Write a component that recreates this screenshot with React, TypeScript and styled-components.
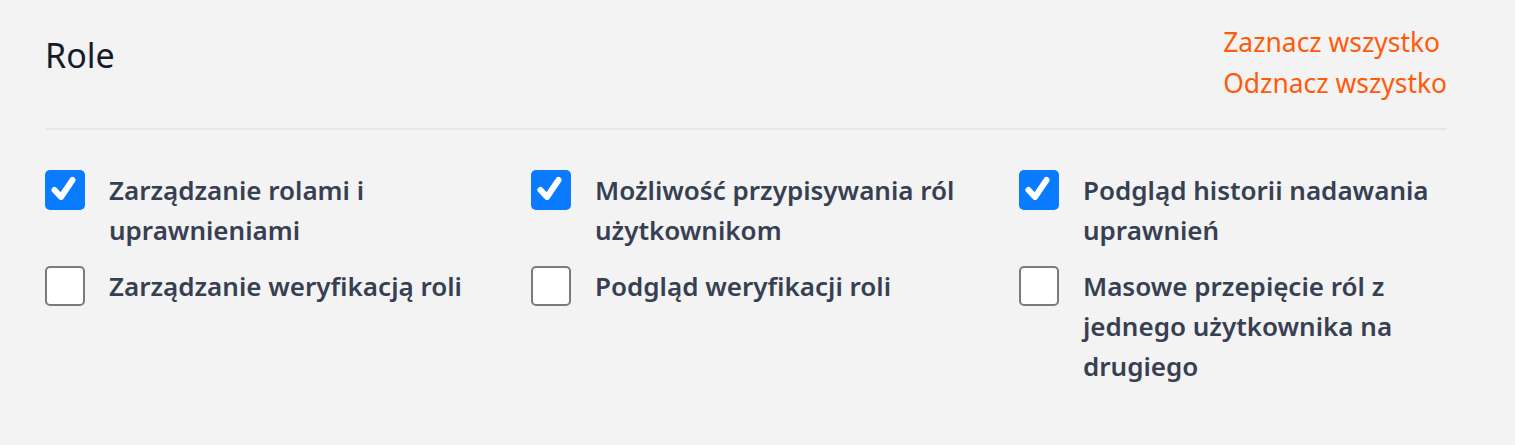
import React, { useState } from "react";
import styled, { createGlobalStyle } from "styled-components";

const Global = createGlobalStyle`
  html, body { margin: 0; padding: 0; background: #f3f3f3; }
  body { font-family: "Noto Sans", "Open Sans", sans-serif; }
  * { box-sizing: border-box; }
`;

const Panel = styled.section`
  padding: 22px 68px 40px 45px;
  background: #f3f3f3;
  width: 1515px;
`;

const Header = styled.header`
  display: flex;
  justify-content: space-between;
  align-items: flex-start;
  padding-bottom: 24px;
  border-bottom: 2px solid #e6e6ea;
`;

const Title = styled.h2`
  margin: 11px 0 0;
  font-size: 34px;
  font-weight: 400;
  line-height: 44px;
  color: #151b2c;
`;

const Links = styled.div`
  display: flex;
  flex-direction: column;
  align-items: flex-start;
`;

const LinkButton = styled.button`
  border: 0;
  background: none;
  padding: 0;
  font-family: inherit;
  font-size: 26.4px;
  line-height: 41px;
  color: #ff5a0a;
  cursor: pointer;
  text-align: left;
`;

const Grid = styled.div`
  display: grid;
  grid-template-columns: 486px 488px 1fr;
  row-gap: 16px;
  margin-top: 40px;
`;

const Item = styled.label`
  display: flex;
  align-items: flex-start;
  gap: 24px;
  cursor: pointer;
`;

const Box = styled.span<{ $checked: boolean }>`
  flex: 0 0 40px;
  width: 40px;
  height: 40px;
  border-radius: 5px;
  display: block;
  background: ${(p) => (p.$checked ? "#0a7bff" : "#ffffff")};
  border: ${(p) => (p.$checked ? "none" : "2px solid #7a7a7a")};
  svg { display: block; }
`;

const Label = styled.span`
  font-size: 26px;
  font-weight: 600;
  line-height: 40px;
  color: #374052;
  max-width: 378px;
`;

const items = [
  { id: 1, text: "Zarządzanie rolami i uprawnieniami", checked: true },
  { id: 2, text: "Możliwość przypisywania ról użytkownikom", checked: true },
  { id: 3, text: "Podgląd historii nadawania uprawnień", checked: true },
  { id: 4, text: "Zarządzanie weryfikacją roli", checked: false },
  { id: 5, text: "Podgląd weryfikacji roli", checked: false },
  { id: 6, text: "Masowe przepięcie ról z jednego użytkownika na drugiego", checked: false },
];

const Check = () => (
  <svg width="40" height="40" viewBox="0 0 40 40" aria-hidden>
    <path d="M9.5 20 L16 27 L27.5 10" fill="none" stroke="#fff" strokeWidth="6" strokeLinecap="round" strokeLinejoin="round" />
  </svg>
);

export default function App() {
  const [state, setState] = useState(() => Object.fromEntries(items.map((i) => [i.id, i.checked])) as Record<number, boolean>);
  return (
    <>
      <Global />
      <Panel>
        <Header>
          <Title>Role</Title>
          <Links>
            <LinkButton onClick={() => setState(Object.fromEntries(items.map((i) => [i.id, true])))}>Zaznacz wszystko</LinkButton>
            <LinkButton onClick={() => setState(Object.fromEntries(items.map((i) => [i.id, false])))}>Odznacz wszystko</LinkButton>
          </Links>
        </Header>
        <Grid>
          {items.map((i) => (
            <Item key={i.id} onClick={(e) => { e.preventDefault(); setState((s) => ({ ...s, [i.id]: !s[i.id] })); }}>
              <Box $checked={state[i.id]}>{state[i.id] && <Check />}</Box>
              <Label>{i.text}</Label>
            </Item>
          ))}
        </Grid>
      </Panel>
    </>
  );
}
